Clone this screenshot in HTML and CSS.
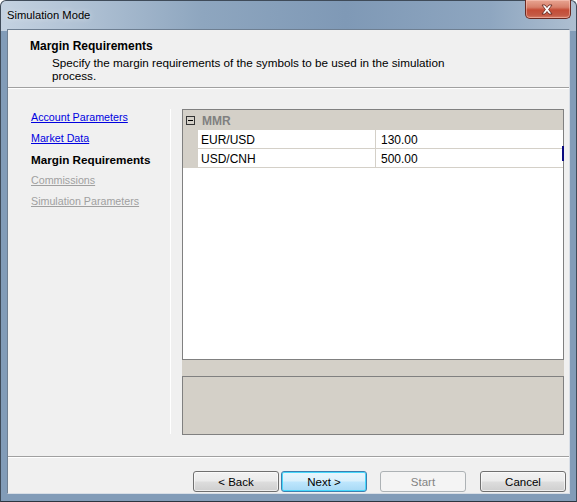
FILE: index.html
```html
<!DOCTYPE html>
<html>
<head>
<meta charset="utf-8">
<link rel="stylesheet" href="styles.css">
</head>
<body>
<div class="window">
  <div class="titlebar">
    <span class="title">Simulation Mode</span>
    <div class="close">
      <svg width="46" height="19" viewBox="0 0 46 19">
        <path d="M18 5 L21 5 L23 7.5 L25 5 L28 5 L24.6 9.5 L28 14 L25 14 L23 11.5 L21 14 L18 14 L21.4 9.5 Z" fill="#ffffff" stroke="#5a1e16" stroke-width="0.8" stroke-linejoin="round"/>
      </svg>
    </div>
  </div>
  <div class="client">
    <div class="header">
      <div class="h-title">Margin Requirements</div>
      <div class="h-desc">Specify the margin requirements of the symbols to be used in the simulation process.</div>
    </div>
    <div class="sep"></div>
    <div class="body">
      <nav class="nav">
        <a class="link">Account Parameters</a>
        <a class="link">Market Data</a>
        <span class="current">Margin Requirements</span>
        <a class="link disabled">Commissions</a>
        <a class="link disabled">Simulation Parameters</a>
      </nav>
      <div class="panel">
        <div class="grid">
          <div class="cat"><span class="toggle"></span><span class="cat-name">MMR</span></div>
          <div class="row"><span class="gut"></span><span class="k">EUR/USD</span><span class="v">130.00</span></div>
          <div class="row"><span class="gut"></span><span class="k">USD/CNH</span><span class="v">500.00</span></div>
          <span class="marker"></span>
        </div>
        <div class="split"></div>
        <div class="desc"></div>
      </div>
    </div>
    <div class="sep"></div>
    <div class="footer">
      <button class="btn">&lt; Back</button>
      <button class="btn default">Next &gt;</button>
      <button class="btn disabled-btn">Start</button>
      <button class="btn cancel">Cancel</button>
    </div>
  </div>
</div>
</body>
</html>
```
FILE: styles.css
```css
html, body {
  margin: 0;
  padding: 0;
  background: #ffffff;
}
body {
  font-family: "Liberation Sans", Arial, sans-serif;
  font-size: 11px;
  color: #000;
}
.window {
  width: 577px;
  height: 502px;
  box-sizing: border-box;
  border-radius: 6px 6px 0 0;
  border: 1px solid #3f4b59;
  border-bottom-color: #2c3540;
  background: linear-gradient(to right, #c4d2e1 0%, #b3c4d6 12%, #8ea6bf 35%, #7f99b6 60%, #8ea6c0 85%, #aebfd1 100%);
  padding: 0 6px 7px 6px;
  display: flex;
  flex-direction: column;
  position: relative;
}
.window::after {
  content: "";
  position: absolute;
  left: 0; right: 0; top: 30px; bottom: 0;
  background: #829cb8;
  z-index: 0;
}
.titlebar {
  height: 29px;
  display: flex;
  justify-content: space-between;
  align-items: flex-start;
  position: relative;
  z-index: 1;
}
.title {
  font-family: "Liberation Sans", Arial, sans-serif;
  font-size: 11.2px;
  margin-top: 8px;
  margin-left: 0;
  color: #000;
  text-shadow: 0 0 6px rgba(255,255,255,0.7);
}
.close {
  width: 46px;
  height: 19px;
  margin-top: -1px;
  margin-right: -1px;
  box-sizing: border-box;
  border: 1px solid #6a2a22;
  border-top: none;
  border-radius: 0 0 5px 5px;
  background: linear-gradient(to bottom, #e8a592 0%, #d7806b 40%, #c44c36 55%, #c45a45 85%, #d9806a 100%);
  box-shadow: inset 0 0 0 1px rgba(255,210,200,0.45);
  display: flex;
  align-items: center;
  justify-content: center;
  overflow: hidden;
}
.close svg {
  display: block;
  margin-left: -2px;
}
.client {
  position: relative;
  z-index: 1;
  width: 563px;
  height: 465px;
  box-sizing: border-box;
  border: 1px solid #6e7f92;
  border-right-color: #d8dee6;
  border-bottom-color: #d8dee6;
  background: #f0f0f0;
  display: flex;
  flex-direction: column;
}
.header {
  height: 57px;
  box-sizing: border-box;
  padding: 9px 0 0 22px;
}
.h-title {
  font-weight: bold;
  font-size: 12px;
  line-height: 15px;
}
.h-desc {
  margin-left: 22px;
  width: 425px;
  font-size: 11.7px;
  line-height: 13px;
  margin-top: 2px;
}
.sep {
  height: 1px;
  background: #a0a0a0;
  border-bottom: 1px solid #ffffff;
}
.body {
  height: 367px;
  display: flex;
}
.nav {
  width: 163px;
  box-sizing: border-box;
  padding: 22px 0 0 23px;
  display: flex;
  flex-direction: column;
  gap: 8px;
  position: relative;
}
.nav::after {
  content: "";
  position: absolute;
  right: 0;
  top: 20px;
  height: 325px;
  width: 1px;
  background: #ffffff;
}
.nav a, .nav span {
  line-height: 13px;
  height: 13px;
  white-space: nowrap;
  font-size: 10.7px;
}
.link {
  color: #0000e0;
  text-decoration: underline;
}
.link.disabled {
  color: #a0a0a0;
}
.nav .current {
  font-weight: bold;
  font-size: 11.7px;
}
.panel {
  margin-top: 20px;
  margin-left: 11px;
  width: 382px;
  height: 326px;
  background: #d4d0c8;
  display: flex;
  flex-direction: column;
}
.grid {
  height: 251px;
  box-sizing: border-box;
  border: 1px solid #808080;
  background: #ffffff;
  position: relative;
  font-size: 12px;
}
.cat {
  height: 20px;
  background: #d4d0c8;
  display: flex;
  align-items: center;
}
.toggle {
  width: 9px;
  height: 9px;
  box-sizing: border-box;
  border: 1px solid #333333;
  margin-left: 3px;
  margin-top: 1px;
  position: relative;
}
.toggle::after {
  content: "";
  position: absolute;
  left: 1px;
  right: 1px;
  top: 3px;
  height: 1px;
  background: #000;
}
.cat-name {
  font-weight: bold;
  color: #808080;
  margin-left: 7px;
  margin-top: 2px;
}
.row {
  height: 19px;
  display: flex;
}
.gut {
  width: 15px;
  background: #d4d0c8;
  flex: none;
}
.k, .v {
  border-bottom: 1px solid #d4d0c8;
  padding-top: 2px;
  line-height: 16px;
  box-sizing: border-box;
  height: 19px;
}
.k {
  width: 178px;
  padding-left: 3px;
  border-right: 1px solid #d4d0c8;
  flex: none;
}
.v {
  flex: 1;
  padding-left: 5px;
}
.marker {
  position: absolute;
  right: -1px;
  top: 36px;
  width: 2px;
  height: 15px;
  background: #0a0a80;
}
.split {
  height: 16px;
}
.desc {
  height: 59px;
  box-sizing: border-box;
  border: 1px solid #808080;
  background: #d4d0c8;
}
.footer {
  height: 35px;
  box-sizing: border-box;
  padding: 13px 0 0 185px;
  display: flex;
  align-items: flex-start;
}
.btn {
  width: 86px;
  height: 21px;
  box-sizing: border-box;
  margin: 0;
  padding: 0;
  font-family: "Liberation Sans", Arial, sans-serif;
  font-size: 11.5px;
  color: #000;
  border: 1px solid #707070;
  border-radius: 3px;
  background: linear-gradient(to bottom, #f2f2f2 0%, #ebebeb 48%, #dddddd 52%, #cfcfcf 100%);
  box-shadow: inset 0 0 0 1px rgba(255,255,255,0.6);
}
.btn.default {
  margin-left: 2px;
  border-color: #3c7fb1;
  background: linear-gradient(to bottom, #eaf6fd 0%, #d9f0fc 48%, #bee6fd 52%, #a7d9f5 100%);
  box-shadow: inset 0 0 0 1px #48d8fb;
}
.btn.disabled-btn {
  margin-left: 13px;
  border-color: #adb2b5;
  background: #f4f4f4;
  color: #838383;
  box-shadow: none;
}
.btn.cancel {
  margin-left: 14px;
}
```
